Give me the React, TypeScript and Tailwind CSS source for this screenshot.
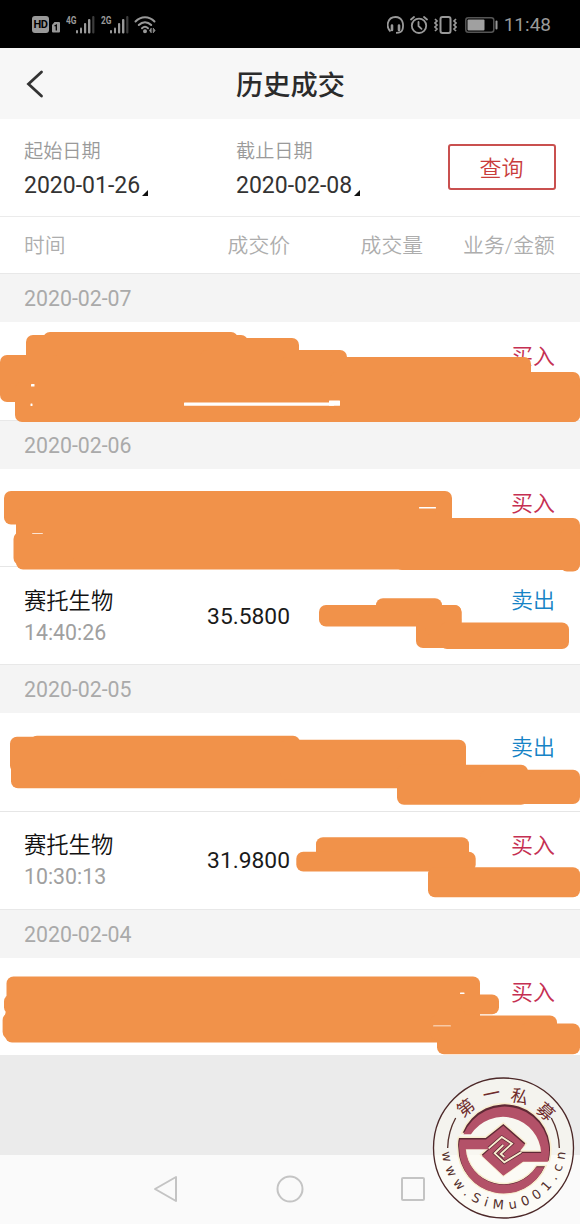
import React from 'react';

type Rect = [number, number, number, number];

interface Trade {
  side: '买入' | '卖出';
  name?: string;
  time?: string;
  price?: string;
  // marker strokes over the private figures: x, y, width, height inside the row
  masks: Rect[];
  gaps?: Rect[];
}

interface DayGroup {
  date: string;
  trades: Trade[];
}

const days: DayGroup[] = [
  {
    date: '2020-02-07',
    trades: [
      {
        side: '买入',
        masks: [
          [43, 10, 195, 60],
          [26, 13, 222, 70],
          [26, 16, 273, 70],
          [0, 33, 60, 47],
          [200, 28, 147, 60],
          [280, 35, 251, 55],
          [330, 50, 250, 50],
          [15, 60, 565, 40],
        ],
        gaps: [
          [184, 80.5, 150, 3.2],
          [329, 78.5, 11, 5.2],
          [31, 62, 3.5, 2.5],
          [30.5, 81.5, 2, 2.5],
        ],
      },
    ],
  },
  {
    date: '2020-02-06',
    trades: [
      {
        side: '买入',
        masks: [
          [4, 22, 448, 33.5],
          [16, 40, 420, 60.5],
          [13.5, 63, 60, 33],
          [395, 49, 185, 52],
          [560, 60, 20, 42.5],
        ],
        gaps: [
          [419, 38, 17, 1.5],
          [32, 64, 11, 0.7],
        ],
      },
      {
        side: '卖出',
        name: '赛托生物',
        time: '14:40:26',
        price: '35.5800',
        masks: [
          [376, 32.3, 66, 20],
          [319, 39, 142.5, 21.5],
          [416, 48, 45.5, 34],
          [425, 39, 36.5, 30],
          [440, 56.5, 129, 26.5],
        ],
      },
    ],
  },
  {
    date: '2020-02-05',
    trades: [
      {
        side: '卖出',
        masks: [
          [30, 22.8, 270, 40],
          [10, 23.7, 100, 36],
          [11, 30, 455, 45.2],
          [280, 26.8, 186, 40],
          [397, 51.8, 131, 40],
          [480, 56.8, 100, 34.3],
        ],
      },
      {
        side: '买入',
        name: '赛托生物',
        time: '10:30:13',
        price: '31.9800',
        masks: [
          [316, 26.3, 153, 30],
          [296.3, 40.8, 179.4, 19.8],
          [428, 56.3, 152, 30],
        ],
      },
    ],
  },
  {
    date: '2020-02-04',
    trades: [
      {
        side: '买入',
        masks: [
          [6.5, 18.5, 473.5, 50],
          [4, 36.5, 495, 19.8],
          [2.6, 55, 60, 26],
          [5, 50, 460, 34.5],
          [430, 57.5, 127, 24],
          [520, 65.5, 60, 18],
          [437, 69, 143, 27.3],
        ],
        gaps: [
          [460, 34.5, 4.5, 1.6],
          [433, 67.5, 18, 0.8],
        ],
      },
    ],
  },
];

function SignalBars() {
  return (
    <svg width="19" height="18" viewBox="0 0 19 18" fill="#999">
      <rect x="0" y="14" width="2" height="3.500" rx="1" />
      <rect x="4" y="11.500" width="2" height="6" rx="1" />
      <rect x="8" y="7" width="2.200" height="10.500" rx="1" />
      <rect x="12" y="3" width="2.400" height="14.500" rx="1" />
      <rect x="16.200" y="0" width="2.200" height="17.500" rx="1" fill="#3c3c3c" />
    </svg>
  );
}

function StatusBar() {
  return (
    <div className="flex h-12 items-center justify-between bg-black pl-8 pr-[29px] pt-px text-[#999]">
      <div className="flex h-[18px] items-start">
        <div className="flex h-[17px] w-[17px] items-center justify-center rounded-[3px] bg-[#999] pt-px text-[11px] font-bold leading-none tracking-[-0.5px] text-black">
          HD
        </div>
        <svg className="ml-[3px] mt-[6px]" width="8" height="11" viewBox="0 0 8 11">
          <path d="M2.500 0H7q1 0 1 1v8.500q0 1-1 1H1q-1 0-1-1V3z" fill="#999" />
          <path d="M2.500 4 4.300 3V8.500" stroke="#000" strokeWidth="1.300" fill="none" />
        </svg>
        <span className="ml-1.5 w-[10px] origin-left scale-x-[.8] text-[10.500px] font-bold leading-[9px]">4G</span>
        <SignalBars />
        <span className="ml-[5.500px] w-[9px] origin-left scale-x-[.8] text-[10.500px] font-bold leading-[9px]">2G</span>
        <SignalBars />
        <svg className="ml-[5px]" width="23" height="18" viewBox="0 0 23 18" fill="none" stroke="#999" strokeWidth="2" strokeLinecap="round">
          <path d="M1.500 5.500C7-.3 15-.3 20.500 5.500M4.800 9c3.700-3.800 8.700-3.800 12.400 0M8 12.300c1.800-1.800 4.200-1.800 6 0" />
          <circle cx="11" cy="15.300" r="1" fill="#999" />
          <path d="m17 12.500-1.500 2 1.500 2zM19.500 12.500l1.500 2-1.500 2z" fill="#999" strokeWidth=".8" />
        </svg>
      </div>
      <div className="flex items-center">
        <svg width="17" height="18" viewBox="0 0 17 18" fill="none" stroke="#999" strokeWidth="1.800">
          <path d="M3.500 15.500C-1.500 11 .3 1 8.500 1c7 0 8.500 7 7 12.500-.7 2.500-2.500 3.300-6.500 3.300" />
          <path d="M5 9.500v4.500M12 9.500v4.500" strokeWidth="2.600" strokeLinecap="round" />
        </svg>
        <svg className="ml-[6px]" width="18" height="18" viewBox="0 0 18 18" fill="none" stroke="#999" strokeWidth="1.800" strokeLinecap="round">
          <circle cx="9" cy="9.800" r="7.200" />
          <path d="M8.500 6v4l3 2.800M1 3.500 4 1M17 3.500 14 1" />
        </svg>
        <svg className="ml-[6px]" width="23" height="18" viewBox="0 0 23 18" fill="none" stroke="#999" strokeWidth="1.700">
          <rect x="6.500" y="1" width="10" height="16" rx="2" strokeWidth="2" />
          <path d="m1 3 2 2-2 2 2 2-2 2 2 2-2 2M22 3l-2 2 2 2-2 2 2 2-2 2 2 2" />
        </svg>
        <svg className="ml-2" width="33" height="16" viewBox="0 0 33 16">
          <rect x=".8" y=".8" width="28" height="14.400" rx="2.500" fill="none" stroke="#555" strokeWidth="1.500" />
          <rect x="2.500" y="2.500" width="17" height="11" rx="1" fill="#a0a0a0" />
          <rect x="30.500" y="3.500" width="2" height="9" rx="1" fill="#999" />
        </svg>
        <span className="ml-[6px] text-[19px] leading-none">11:48</span>
      </div>
    </div>
  );
}

function DateField({ label, value }: { label: string; value: string }) {
  return (
    <div className="w-[212px]">
      <div className="text-[19.200px] font-[350] leading-[26px] text-[#9a9a9a]">{label}</div>
      <div className="mt-[6px] flex items-end text-[23px] leading-[30px] text-[#333]">
        {value}
        <svg className="mb-[5px] ml-[2px]" width="6" height="6" viewBox="0 0 6 6">
          <path d="M6 0v6H0z" fill="#111" />
        </svg>
      </div>
    </div>
  );
}

function TradeRow({ trade, divider }: { trade: Trade; divider: boolean }) {
  return (
    <div className="relative flex h-[97.800px] bg-white px-6">
      {divider && <div className="absolute inset-x-0 top-0 h-px bg-[#e6e6e6]" />}
      <div className="w-[150px] pt-[18.500px]">
        <div className="h-8 text-[22.300px] font-[350] leading-8 text-[#111]">{trade.name}</div>
        <div className="text-[21.300px] leading-8 text-[#a0a0a0]">{trade.time}</div>
      </div>
      <div className="w-[116px] pt-[34.500px] text-right text-[22.800px] leading-8 text-[#1a1a1a]">{trade.price}</div>
      <div
        className={`flex-1 pr-px pt-[19px] text-right text-[22px] font-[350] leading-8 ${
          trade.side === '买入' ? 'text-[#c52f52]' : 'text-[#1683c6]'
        }`}
      >
        {trade.side}
      </div>
      <svg className="absolute left-0 top-0 z-10 overflow-visible" width="580" height="98" viewBox="0 0 580 98">
        {trade.masks.map(([x, y, w, h], i) => (
          <rect key={i} x={x} y={y} width={w} height={h} rx="7" fill="#f1924a" />
        ))}
        {trade.gaps?.map(([x, y, w, h], i) => (
          <rect key={i} x={x} y={y} width={w} height={h} rx=".5" fill="#fff" />
        ))}
      </svg>
    </div>
  );
}

const sealPath =
  'M128 206A136 136 0 0 1 386 290H310L250 333 185 272 208 252H115Q113 236 117 222H197L250 180 316 238 296 263H366A117 117 0 0 0 151 206ZM375 307A136 136 0 0 1 115 252H135A117 117 0 0 0 350 307Z';
const knotPath = 'M206 253 245 219 276 239 242 270 253 279M304 264 253 295 224 268 250 243';

function Seal() {
  return (
    <svg className="absolute bottom-0 right-0 z-20" width="160" height="160" viewBox="0 0 480 480">
      <defs>
        <path id="seal-url" d="M65 250A186 186 0 0 0 437 250" />
      </defs>
      <circle cx="250.500" cy="252" r="210" fill="#fffdf2" fillOpacity=".45" stroke="#4c2828" strokeWidth="4" />
      <path d="M83 252Q84 203 107 162M418 252Q417 203 394 162" fill="none" stroke="#54302c" strokeWidth="4" />
      <circle cx="251" cy="256" r="138" fill="#fcfbf3" fillOpacity=".5" />
      <path d={sealPath} fill="#5f2935" stroke="#f8edcf" strokeWidth="9" />
      <path d={sealPath} fill="#5f2935" />
      <path d={sealPath} fill="#b35168" transform="translate(251 258) scale(.98) translate(-251 -254)" />
      <g fill="none">
        <path d={knotPath} stroke="#5f2935" strokeWidth="10" />
        <path d={knotPath} stroke="#f8edcf" strokeWidth="5.500" />
      </g>
      <g fill="#6e2b2b" fontSize="52" textAnchor="middle">
        <text transform="translate(137 131) rotate(-38)" y="19">第</text>
        <text transform="translate(214 89) rotate(-12)" y="19">一</text>
        <text transform="translate(299 97) rotate(14)" y="19">私</text>
        <text transform="translate(377 143) rotate(42)" y="19">募</text>
      </g>
      <text className="font-['DejaVu_Sans']" fontSize="39" fill="#54302c">
        <textPath href="#seal-url" startOffset="14" textLength="556" lengthAdjust="spacing">
          www.SiMu001.cn
        </textPath>
      </text>
    </svg>
  );
}

export default function App() {
  return (
    <div className="relative flex h-[1224px] w-[580px] flex-col overflow-hidden bg-[#ebebeb] font-[Roboto,'Noto_Sans_CJK_SC',sans-serif]">
      <StatusBar />

      <header className="flex h-[71px] items-center bg-[#f7f7f7] px-[26px]">
        <svg width="18" height="28" viewBox="0 0 18 28" fill="none" stroke="#333" strokeWidth="2.800" strokeLinecap="round">
          <path d="M15.500 2 2.500 14l13 12" />
        </svg>
        <h1 className="flex-1 pr-[17px] pt-1.5 text-center text-[27.200px] font-medium leading-none text-[#2b2b2b]">历史成交</h1>
      </header>

      <section className="flex h-[98px] items-start border-b border-[#ebebeb] bg-white pl-6 pt-5">
        <DateField label="起始日期" value="2020-01-26" />
        <DateField label="截止日期" value="2020-02-08" />
        <button className="mt-[5px] flex h-[46px] w-[108px] items-center justify-center rounded-[3px] border-2 border-[#c9504f] pr-px pt-0.5 text-[22px] font-[350] text-[#c93c3c]">
          查询
        </button>
      </section>

      <div className="flex h-14 shrink-0 items-center bg-white px-6 pt-[3px] text-[20.800px] font-[350] text-[#adadad]">
        <span className="w-[150px]">时间</span>
        <span className="w-[116px] text-right">成交价</span>
        <span className="w-[133px] text-right">成交量</span>
        <span className="flex-1 pr-px text-right tracking-[.1px]">业务/金额</span>
      </div>

      <main>
        {days.map((day) => (
          <section key={day.date}>
            <div className="h-[48.900px] border-t border-[#e8e8e8] bg-[#f4f4f4] pl-6 text-[21.300px] leading-[50px] text-[#aaa]">
              {day.date}
            </div>
            {day.trades.map((trade, i) => (
              <TradeRow key={i} trade={trade} divider={i > 0} />
            ))}
          </section>
        ))}
      </main>

      <nav className="mt-auto flex h-[69px] items-center bg-[#fafafa] pb-px pl-[152px]">
        <svg width="28" height="28" viewBox="0 0 28 28" fill="none" stroke="#c4c4c4" strokeWidth="2" strokeLinejoin="round">
          <path d="M24 2v24L3 14z" />
        </svg>
        <svg className="ml-24" width="28" height="28" viewBox="0 0 28 28" fill="none" stroke="#c4c4c4" strokeWidth="2">
          <circle cx="14" cy="14" r="12.500" />
        </svg>
        <svg className="ml-[94.500px]" width="28" height="28" viewBox="0 0 28 28" fill="none" stroke="#c4c4c4" strokeWidth="2">
          <rect x="3" y="3" width="22" height="22" rx="1" />
        </svg>
      </nav>

      <Seal />
    </div>
  );
}
